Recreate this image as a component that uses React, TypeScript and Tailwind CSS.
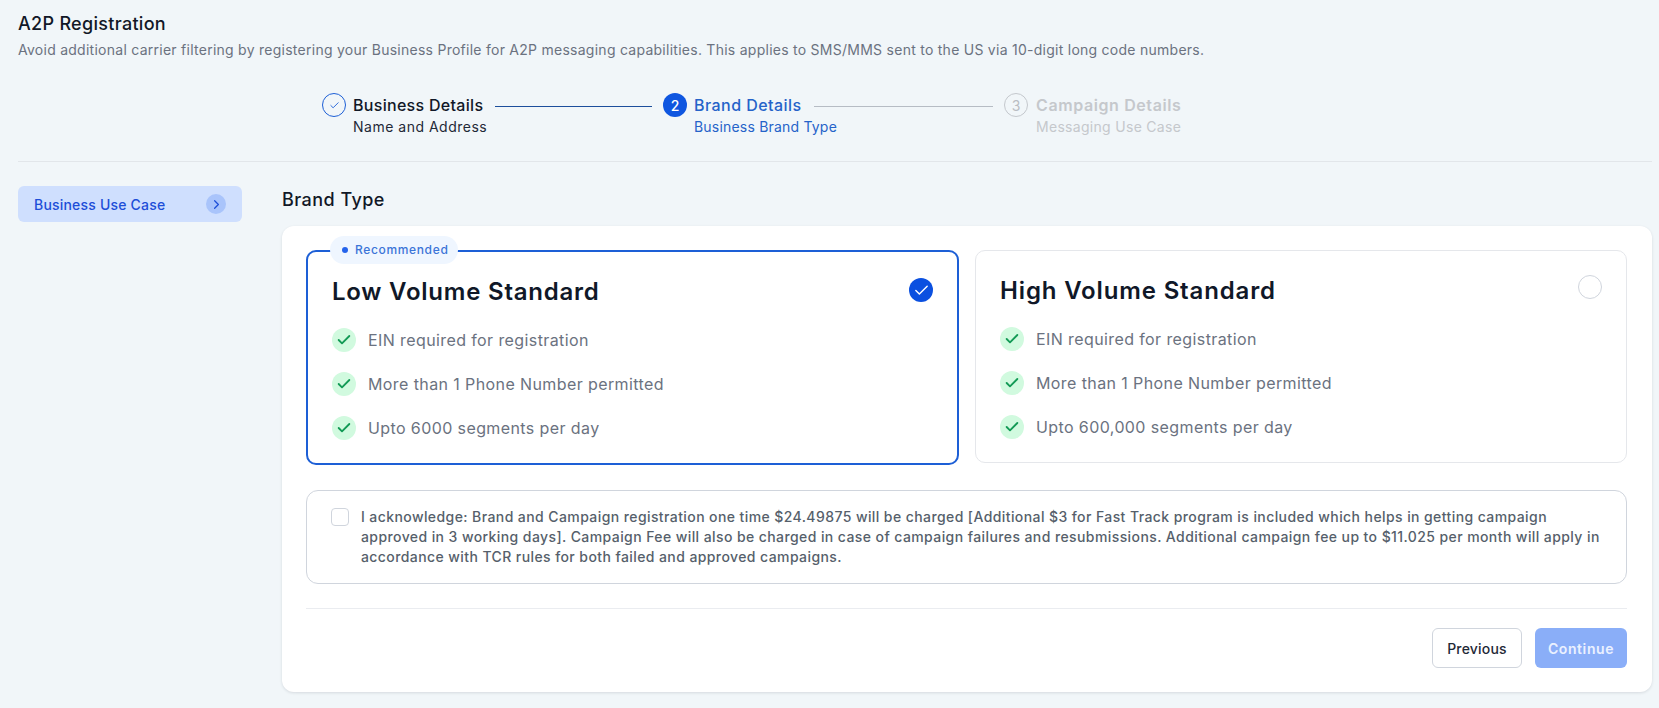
import { Check, ChevronRight } from 'lucide-react'

const font = 'font-["Inter","Liberation_Sans",sans-serif]'

function FeatureRow({ text }: { text: string }) {
  return (
    <li className="flex items-center gap-3">
      <span className="flex h-6 w-6 shrink-0 items-center justify-center rounded-full bg-[#d1fadf]">
        <Check size={16} strokeWidth={2.75} className="text-[#129a55]" />
      </span>
      <span className="whitespace-nowrap text-[16px] leading-6 tracking-[0.4px] text-[#6b7280]">{text}</span>
    </li>
  )
}

function Features({ items }: { items: string[] }) {
  return (
    <ul className="mt-[18px] flex flex-col gap-5">
      {items.map((item) => (
        <FeatureRow key={item} text={item} />
      ))}
    </ul>
  )
}

export default function App() {
  return (
    <div className={`${font} h-[708px] w-full overflow-hidden bg-[#f1f6f9] pl-[18px] pr-[7px] pt-3 text-[#111827]`}>
      <h1 className="text-[18px] font-medium leading-6 tracking-[0.3px]">A2P Registration</h1>
      <p className="mt-1 whitespace-nowrap text-[14px] leading-5 tracking-[0.26px] text-[#6b7280]">
        Avoid additional carrier filtering by registering your Business Profile for A2P messaging capabilities. This
        applies to SMS/MMS sent to the US via 10-digit long code numbers.
      </p>

      {/* stepper */}
      <div className="mt-[33px] flex items-start pl-[304px]">
        <div className="flex h-6 w-6 shrink-0 items-center justify-center rounded-full border border-[#1d5fd6] text-[#1d5fd6]">
          <Check size={11} strokeWidth={2} />
        </div>
        <div className="ml-[7px] w-[130px] whitespace-nowrap">
          <div className="text-[16px] font-medium leading-6 tracking-[0.3px]">Business Details</div>
          <div className="text-[14px] leading-5 tracking-[0.5px] text-[#1f2937]">Name and Address</div>
        </div>
        <div className="ml-3 mr-[11px] mt-[13px] h-px w-[157px] bg-[#1d4f9c]" />
        <div className="flex h-6 w-6 shrink-0 items-center justify-center rounded-full bg-[#0f56e0] text-[14px] font-medium text-white">
          2
        </div>
        <div className="ml-[7px] w-[108px] whitespace-nowrap text-[#2563c9]">
          <div className="text-[16px] font-medium leading-6 tracking-[0.45px]">Brand Details</div>
          <div className="text-[14px] leading-5 tracking-[0.2px]">Business Brand Type</div>
        </div>
        <div className="ml-3 mr-[11px] mt-[13px] h-px w-[179px] bg-[#b6bcc4]" />
        <div className="flex h-6 w-6 shrink-0 items-center justify-center rounded-full border border-[#c4c8cd] text-[14px] text-[#b9bdc3]">
          3
        </div>
        <div className="ml-2 whitespace-nowrap text-[#c5c8cc]">
          <div className="text-[16px] font-semibold leading-6 tracking-[0.6px]">Campaign Details</div>
          <div className="text-[14px] leading-5 tracking-[0.3px]">Messaging Use Case</div>
        </div>
      </div>

      <div className="mt-6 h-px bg-[#e2e6ea]" />

      <div className="mt-6 flex gap-10">
        {/* sidebar */}
        <aside className="w-[224px] shrink-0">
          <div className="flex h-9 items-center justify-between rounded-md bg-[#cfdffe] pl-4 pr-4">
            <span className="text-[14px] font-medium tracking-[0.2px] text-[#1d4ed8]">Business Use Case</span>
            <span className="flex h-5 w-5 items-center justify-center rounded-full bg-[#a9c4fb] text-[#1d4ed8]">
              <ChevronRight size={15} />
            </span>
          </div>
        </aside>

        <main className="min-w-0 flex-1">
          <h2 className="mt-[2px] text-[18px] font-medium leading-6 tracking-[0.45px]">Brand Type</h2>

          <section className="mt-[14px] h-[466px] rounded-xl bg-white pl-6 pr-[25px] pt-6 shadow-[0_1px_3px_rgba(16,24,40,0.12)]">
            <div className="grid grid-cols-[653px_1fr] items-start gap-4">
              <div className="relative h-[215px] rounded-[10px] border-2 border-[#1d5fd6] pl-6 pr-6 pt-[22px]">
                <div className="absolute left-[22px] top-[-16px] flex h-7 w-[128px] items-center gap-[7px] rounded-[14px] bg-[#eff6ff] pl-[12px]">
                  <span className="h-[6px] w-[6px] rounded-full bg-[#2563eb]" />
                  <span className="text-[12px] font-medium tracking-[0.65px] text-[#3b74d8]">Recommended</span>
                </div>
                <div className="flex items-start justify-between">
                  <h3 className="text-[24px] font-semibold leading-9 tracking-[0.77px] text-[#101828]">Low Volume Standard</h3>
                  <span className="mt-1 flex h-6 w-6 items-center justify-center rounded-full bg-[#0b50e0] text-white">
                    <Check size={17} strokeWidth={2} />
                  </span>
                </div>
                <Features items={['EIN required for registration', 'More than 1 Phone Number permitted', 'Upto 6000 segments per day']} />
              </div>

              <div className="h-[213px] rounded-[10px] border border-[#e5e7eb] pl-6 pr-6 pt-[22px]">
                <div className="flex items-start justify-between">
                  <h3 className="text-[24px] font-semibold leading-9 tracking-[0.85px] text-[#101828]">High Volume Standard</h3>
                  <span className="mt-0.5 h-6 w-6 rounded-full border border-[#d0d5dd]" />
                </div>
                <Features items={['EIN required for registration', 'More than 1 Phone Number permitted', 'Upto 600,000 segments per day']} />
              </div>
            </div>

            <div className="mt-[25px] flex h-[94px] gap-3 rounded-xl border border-[#d0d5dd] pl-6 pt-4">
              <span className="mt-px h-[18px] w-[18px] shrink-0 rounded border border-[#d0d5dd]" />
              <p className="whitespace-nowrap text-[14px] font-medium leading-5 tracking-[0.41px] text-[#565f6b]">
                I acknowledge: Brand and Campaign registration one time $24.49875 will be charged [Additional $3 for Fast Track program is included which helps in getting campaign
                <br />
                approved in 3 working days]. Campaign Fee will also be charged in case of campaign failures and resubmissions. Additional campaign fee up to $11.025 per month will apply in
                <br />
                accordance with TCR rules for both failed and approved campaigns.
              </p>
            </div>

            <div className="mt-6 border-t border-[#eaecf0] pt-[19px]">
              <div className="flex justify-end gap-[13px]">
                <button type="button" className="h-10 w-[90px] rounded-md border border-[#d0d5dd] bg-white text-[14px] font-medium tracking-[0.2px] text-[#1f2937]">
                  Previous
                </button>
                <button type="button" className="h-10 w-[92px] rounded-md bg-[#8aaef8] text-[14px] font-semibold tracking-[0.6px] text-[#eaf1ff]">
                  Continue
                </button>
              </div>
            </div>
          </section>
        </main>
      </div>
    </div>
  )
}
